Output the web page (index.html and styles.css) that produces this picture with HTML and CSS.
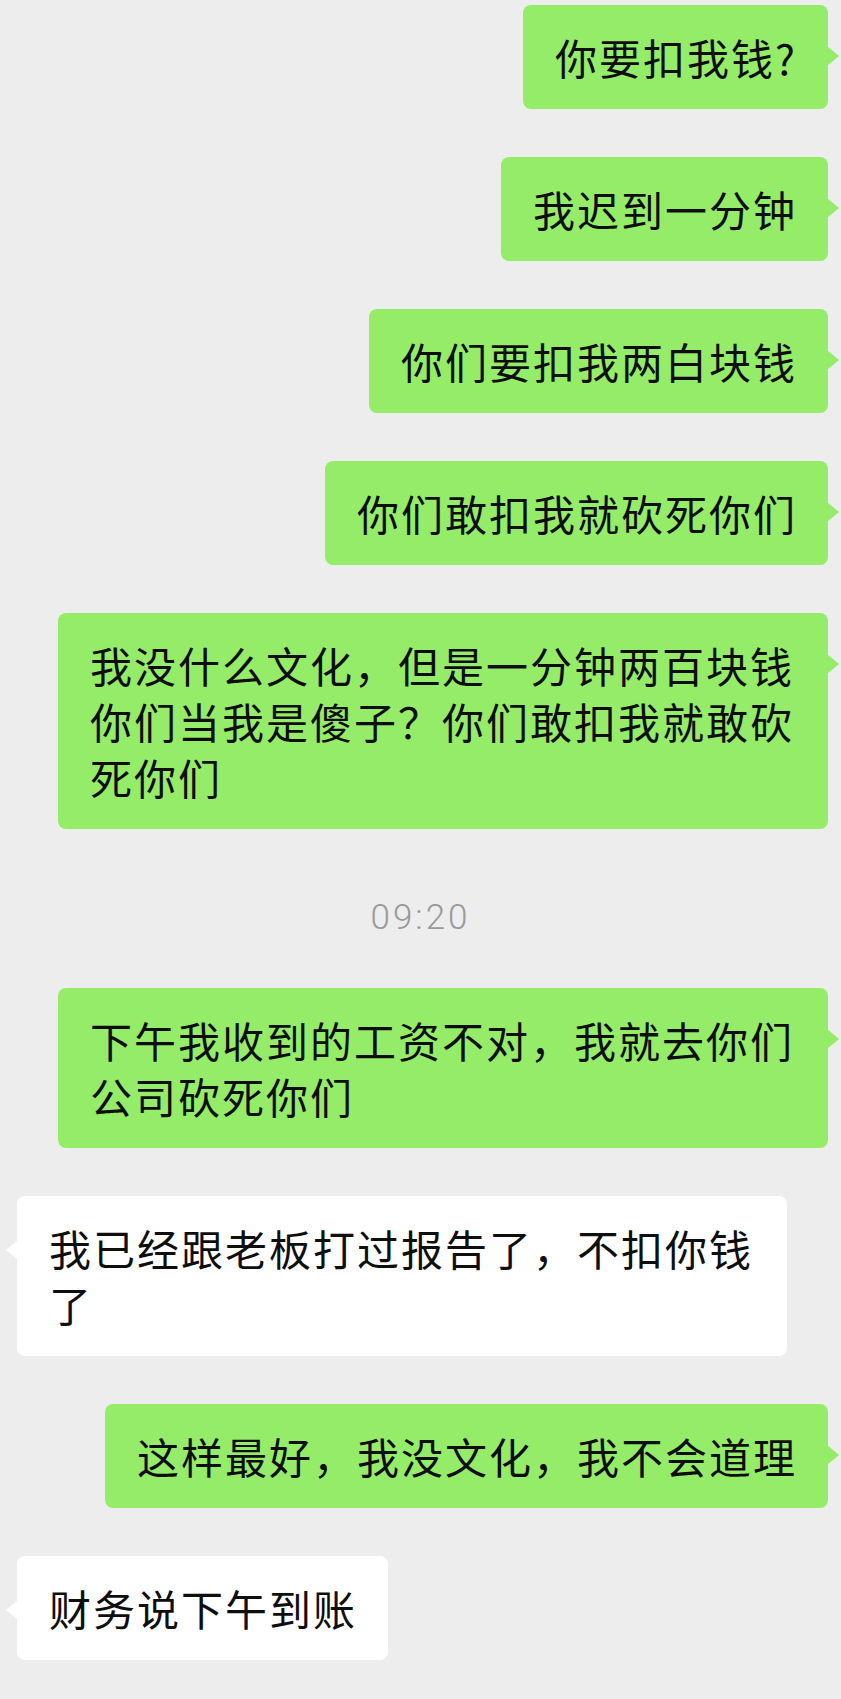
FILE: index.html
```html
<!DOCTYPE html>
<html lang="zh-CN">
<head>
<meta charset="utf-8">
<title>聊天记录</title>
<link rel="stylesheet" href="styles.css">
</head>
<body>
<main class="chat">
  <div class="row me"><div class="bubble green">你要扣我钱?</div></div>
  <div class="row me"><div class="bubble green">我迟到一分钟</div></div>
  <div class="row me"><div class="bubble green">你们要扣我两白块钱</div></div>
  <div class="row me"><div class="bubble green">你们敢扣我就砍死你们</div></div>
  <div class="row me"><div class="bubble green">我没什么文化，但是一分钟两百块钱你们当我是傻子？你们敢扣我就敢砍死你们</div></div>
  <div class="time">09:20</div>
  <div class="row me"><div class="bubble green">下午我收到的工资不对，我就去你们公司砍死你们</div></div>
  <div class="row other"><div class="bubble white">我已经跟老板打过报告了，不扣你钱了</div></div>
  <div class="row me"><div class="bubble green">这样最好，我没文化，我不会道理</div></div>
  <div class="row other"><div class="bubble white">财务说下午到账</div></div>
</main>
</body>
</html>
```

FILE: styles.css
```css
html, body {
  margin: 0;
  padding: 0;
  background: #ededed;
}

body {
  width: 841px;
  min-height: 1699px;
  font-family: "Noto Sans CJK SC", "Noto Sans", sans-serif;
}

.chat {
  display: flex;
  flex-direction: column;
  gap: 48px;
  padding-top: 5px;
}

.row {
  display: flex;
}

.row.me {
  justify-content: flex-end;
  padding-right: 13px;
}

.row.other {
  justify-content: flex-start;
  padding-left: 17px;
}

.bubble {
  position: relative;
  box-sizing: border-box;
  max-width: 770px;
  padding: 24px 31px 24px 32px;
  border-radius: 8px;
  font-size: 42px;
  font-weight: 400;
  letter-spacing: 2px;
  line-height: 56px;
  color: #0e0e0e;
}

.bubble.green {
  background: #95ec69;
}

.bubble.white {
  background: #ffffff;
}

.bubble.green::after {
  content: "";
  position: absolute;
  right: -11px;
  top: 41px;
  border-left: 12px solid #95ec69;
  border-top: 10px solid transparent;
  border-bottom: 10px solid transparent;
}

.bubble.white::after {
  content: "";
  position: absolute;
  left: -11px;
  top: 44px;
  border-right: 12px solid #ffffff;
  border-top: 10px solid transparent;
  border-bottom: 10px solid transparent;
}

.time {
  margin: 21px 0 2px;
  text-align: center;
  font-family: Roboto, "Liberation Sans", sans-serif;
  font-weight: 300;
  font-size: 35px;
  letter-spacing: 3px;
  line-height: 40px;
  color: #999999;
}
```
